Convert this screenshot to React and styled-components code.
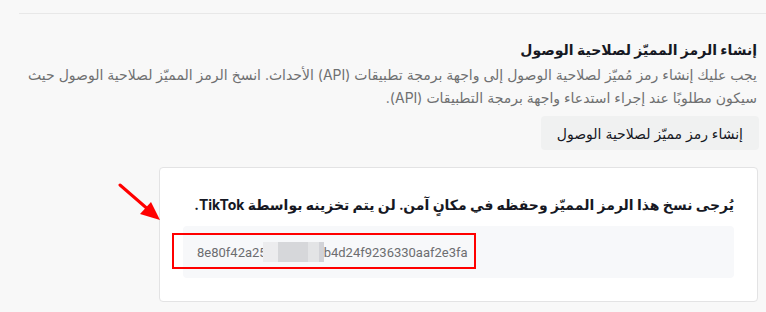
import React from 'react';
import styled, { createGlobalStyle } from 'styled-components';

const GlobalStyle = createGlobalStyle`
	html, body {
		margin: 0;
		padding: 0;
		background: #f8f8f8;
	}
	body {
		font-family: Inter, "Noto Sans", "DejaVu Sans", sans-serif;
		color: #161823;
	}
`;

const Page = styled.div`
	width: 766px;
	height: 312px;
	overflow: hidden;
	padding: 13px 0 0 19px;
	box-sizing: border-box;
`;

const Divider = styled.div`
	height: 1px;
	background: #e8e8e8;
`;

const Section = styled.div`
	direction: rtl;
	padding: 26px 9px 0 0;
	display: flex;
	flex-direction: column;
	align-items: flex-start;
`;

const Title = styled.h3`
	margin: 0;
	font-size: 14px;
	font-weight: 700;
	line-height: 20px;
	color: #161823;
`;

const Description = styled.p`
	margin: 3px 0 0;
	font-size: 14px;
	line-height: 23px;
	color: #6f7071;
`;

const Button = styled.button`
	margin-top: 7px;
	margin-right: -2px;
	height: 34px;
	padding: 0 16px;
	border: none;
	border-radius: 4px;
	background: #f0f1f1;
	font-family: inherit;
	font-size: 14px;
	color: #161823;
	cursor: pointer;
`;

const CardRow = styled.div`
	position: relative;
	margin-top: 17px;
	direction: ltr;
	padding-left: 140px;
	padding-right: 8px;
`;

const Card = styled.div`
	direction: rtl;
	background: #fff;
	border: 1px solid #e3e3e4;
	border-radius: 4px;
	padding: 27px 23px 23px;
`;

const Notice = styled.p`
	margin: 0;
	font-size: 14px;
	font-weight: 700;
	line-height: 20px;
	color: #161823;
`;

const TokenBox = styled.div`
	position: relative;
	direction: ltr;
	margin-top: 11px;
	height: 52px;
	display: flex;
	align-items: center;
	padding: 0 14px;
	background: #f7f8fa;
	border-radius: 4px;
	font-family: Roboto, "Liberation Sans", sans-serif;
	font-size: 13px;
	color: #6c6d70;
`;

const Blur = styled.span`
	display: inline-flex;
	height: 20px;
	margin-left: -4px;
	span {
		display: block;
		height: 100%;
	}
`;

const Highlight = styled.div`
	position: absolute;
	left: -11px;
	top: 7px;
	width: 300px;
	height: 32px;
	border: 2px solid #f00;
	pointer-events: none;
`;

const Arrow = styled.svg`
	position: absolute;
	left: 99px;
	top: 16px;
`;

const blurParts = [
	{ w: 15, c: '#ececee' },
	{ w: 30, c: '#d6d7da' },
	{ w: 11, c: '#e3e4e6' },
	{ w: 5, c: '#d2d3d8' },
];

const App = () => {
	return (
		<>
			<GlobalStyle />
			<Page>
				<Divider />
				<Section>
					<Title>إنشاء الرمز المميّز لصلاحية الوصول</Title>
					<Description>
						يجب عليك إنشاء رمز مُميّز لصلاحية الوصول إلى واجهة برمجة تطبيقات (API) الأحداث. انسخ الرمز المميّز لصلاحية الوصول حيث
						سيكون مطلوبًا عند إجراء استدعاء واجهة برمجة التطبيقات (API).
					</Description>
					<Button>إنشاء رمز مميّز لصلاحية الوصول</Button>
				</Section>
				<CardRow>
					<Arrow width="48" height="42" viewBox="0 0 48 42">
						<line x1="2" y1="2" x2="32" y2="28" stroke="#f00" strokeWidth="3" strokeLinecap="round" />
						<polygon points="42,37 22,31 33,19" fill="#f00" />
					</Arrow>
					<Card>
						<Notice>يُرجى نسخ هذا الرمز المميّز وحفظه في مكانٍ آمن. لن يتم تخزينه بواسطة TikTok.</Notice>
						<TokenBox>
							<span>8e80f42a25</span>
							<Blur>
								{blurParts.map((p, i) => (
									<span key={i} style={{ width: p.w, background: p.c }} />
								))}
							</Blur>
							<span>b4d24f9236330aaf2e3fa</span>
							<Highlight />
						</TokenBox>
					</Card>
				</CardRow>
			</Page>
		</>
	);
};

export default App;
